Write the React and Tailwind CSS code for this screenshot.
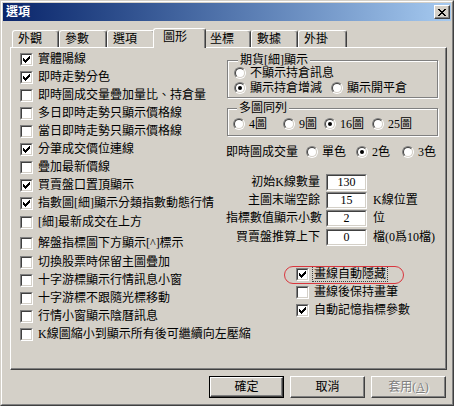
import React from 'react';

// classic win2k 3D helpers
const sunkenOuter = 'border border-t-[#808080] border-l-[#808080] border-b-white border-r-white';
const sunkenInner = 'border border-t-[#404040] border-l-[#404040] border-b-[#d4d0c8] border-r-[#d4d0c8]';
const raised = 'border border-t-white border-l-white border-b-[#404040] border-r-[#404040] shadow-[inset_-1px_-1px_0_#808080]';

const CHECK_TOPS = [2, 3, 4, 3, 2, 1, 0];

const Check = ({ on }) => (
  <span className={`block w-[13px] h-[13px] shrink-0 ${sunkenOuter}`}>
    <span className={`block w-full h-full bg-white ${sunkenInner}`}>
      {on && (
        <svg width="9" height="9" viewBox="0 0 9 9" shapeRendering="crispEdges" className="block">
          {CHECK_TOPS.map((t, i) => (
            <rect key={i} x={i + 1} y={t + 1} width="1" height="3" fill="#000" />
          ))}
        </svg>
      )}
    </span>
  </span>
);

const Radio = ({ on }) => (
  <span className={`block w-[12px] h-[12px] shrink-0 rounded-full ${sunkenOuter}`}>
    <span className={`flex items-center justify-center w-full h-full rounded-full bg-white ${sunkenInner}`}>
      {on && <span className="block w-[4px] h-[4px] rounded-full bg-black" />}
    </span>
  </span>
);

const RadioItem = ({ on, label, className = '' }) => (
  <div className={`flex items-center gap-[4px] shrink-0 ${className}`}>
    <Radio on={on} />
    <span className="whitespace-nowrap">{label}</span>
  </div>
);

const leftItems = [
  ['實體陽線', true, ''],
  ['即時走勢分色', true, ''],
  ['即時圖成交量疊加量比、持倉量', false, ''],
  ['多日即時走勢只顯示價格線', false, ''],
  ['當日即時走勢只顯示價格線', false, ''],
  ['分筆成交價位連線', true, ''],
  ['疊加最新價線', false, ''],
  ['買賣盤口置頂顯示', true, ''],
  ['指數圖[細]顯示分類指數動態行情', true, ''],
  ['[細]最新成交在上方', false, 'mt-[1px]'],
  ['解盤指標圖下方顯示[^]標示', false, 'mt-[3px]'],
  ['切換股票時保留主圖疊加', false, 'mt-[1px]'],
  ['十字游標顯示行情訊息小窗', false, ''],
  ['十字游標不跟隨光標移動', false, ''],
  ['行情小窗顯示陰曆訊息', false, ''],
  ['K線圖縮小到顯示所有後可繼續向左壓縮', false, ''],
];

const numberRows = [
  ['初始K線數量', '130', '', ''],
  ['主圖末端空餘', '15', 'K線位置', ''],
  ['指標數值顯示小數', '2', '位', ''],
  ['買賣盤推算上下', '0', '檔(0爲10檔)', 'mt-[1px]'],
];

const tabs = [
  ['外觀', 'w-[47px]'],
  ['參數', 'w-[48px]'],
  ['選項', 'w-[48px]'],
  ['圖形', 'w-[53px]', true],
  ['坐標', 'w-[47px]'],
  ['數據', 'w-[47px]'],
  ['外掛', 'w-[49px]'],
];

const Group = ({ title, children, className = '' }) => (
  <fieldset className={`w-[211px] border border-[#808080] shadow-[inset_1px_1px_0_#fff,1px_1px_0_#fff] ${className}`}>
    <legend className="ml-[4px] px-[2px] h-[12px] leading-[12px] bg-[#d4d0c8] relative z-10">{title}</legend>
    {children}
  </fieldset>
);

export default function App() {
  return (
    <div className="w-[454px] h-[406px] bg-[#d4d0c8] border border-t-[#d4d0c8] border-l-[#d4d0c8] border-b-[#404040] border-r-[#404040] text-[12px] leading-[14px] text-black font-['Liberation_Serif','Noto_Sans_CJK_TC',serif]">
      <div className="h-full border border-t-white border-l-white border-b-[#808080] border-r-[#808080] p-[1px] flex flex-col">
        {/* Title bar */}
        <div className="h-[18px] flex items-center justify-between pl-[3px] pr-[1px] bg-linear-to-r from-[#0a246a] to-[#a6caf0]">
          <span className="text-white font-bold">選項</span>
          <div className={`w-[16px] h-[14px] flex items-center justify-center bg-[#d4d0c8] ${raised}`}>
            <svg width="8" height="7" viewBox="0 0 8 7" shapeRendering="crispEdges">
              <path d="M0 0h2v1h1v1h2V1h1V0h2v1H7v1H6v1H5v1h1v1h1v1h1v1H6V6H5V5H3v1H2v1H0V6h1V5h1V4h1V3H2V2H1V1H0z" fill="#000" />
            </svg>
          </div>
        </div>

        {/* Tabs */}
        <div className="flex items-end h-[19px] mt-[7px] pl-[9px]">
          {tabs.map(([label, w, active]) =>
            active ? (
              <div
                key={label}
                className={`${w} h-[20px] -mx-[2px] -mb-[1px] relative z-10 bg-[#d4d0c8] border-t border-l border-r border-t-white border-l-white border-r-[#404040] rounded-t-[3px] shadow-[inset_-1px_0_0_#808080] pl-[9px] pt-[1px]`}
              >
                {label}
              </div>
            ) : (
              <div
                key={label}
                className={`${w} h-[17px] border-t border-l border-r border-t-white border-l-white border-r-[#404040] rounded-t-[3px] shadow-[inset_-1px_0_0_#808080] pl-[5px] pt-[1px]`}
              >
                {label}
              </div>
            )
          )}
        </div>

        {/* Panel */}
        <div className={`ml-[7px] w-[437px] h-[323px] flex ${raised}`}>
          {/* Left column */}
          <div className="w-[216px] shrink-0 pl-[9px] pt-[2px] flex flex-col">
            {leftItems.map(([label, on, extra]) => (
              <div key={label} className={`h-[18px] flex items-center gap-[5px] ${extra}`}>
                <Check on={on} />
                <span className="whitespace-nowrap">{label}</span>
              </div>
            ))}
          </div>

          {/* Right column */}
          <div className="pt-[6px] flex flex-col">
            <Group title="期貨[細]顯示" className="pl-[6px] pb-[2px]">
              <div className="h-[14px] flex items-center">
                <RadioItem label="不顯示持倉訊息" />
              </div>
              <div className="h-[14px] mt-[1px] flex items-center">
                <RadioItem on label="顯示持倉增減" className="w-[97px]" />
                <RadioItem label="顯示開平倉" />
              </div>
            </Group>

            <Group title="多圖同列" className="mt-[4px] pl-[5px] pt-[3px] pb-[4px]">
              <div className="h-[14px] flex items-center">
                <RadioItem label="4圖" className="w-[50px]" />
                <RadioItem label="9圖" className="w-[41px]" />
                <RadioItem on label="16圖" className="w-[48px]" />
                <RadioItem label="25圖" />
              </div>
            </Group>

            <div className="h-[16px] mt-[8px] -ml-[1px] flex items-center">
              <span className="w-[80px] whitespace-nowrap">即時圖成交量</span>
              <RadioItem label="單色" className="w-[50px]" />
              <RadioItem on label="2色" className="w-[46px]" />
              <RadioItem label="3色" />
            </div>

            <div className="mt-[13px] flex flex-col">
              {numberRows.map(([label, value, unit, extra]) => (
                <div key={label} className={`h-[18px] -ml-[1px] flex items-center ${extra}`}>
                  <span className="w-[94px] text-right whitespace-nowrap">{label}</span>
                  <div className={`ml-[6px] w-[41px] h-[17px] ${sunkenOuter}`}>
                    <div className={`w-full h-full bg-white flex items-center justify-center ${sunkenInner}`}>
                      {value}
                    </div>
                  </div>
                  <span className="ml-[6px] whitespace-nowrap">{unit}</span>
                </div>
              ))}
            </div>

            <div className="mt-[19px] flex flex-col">
              <div className="relative h-[18px] pl-[69px] flex items-center gap-[4px]">
                <Check on />
                <span className="outline-1 outline-dotted outline-[#404040] outline-offset-0 px-[1px]">畫線自動隱藏</span>
                <div className="absolute left-[57px] top-[1px] w-[120px] h-[18px] rounded-full border border-[#d9363e]" />
              </div>
              <div className="h-[18px] pl-[69px] flex items-center gap-[5px]">
                <Check />
                <span>畫線後保持畫筆</span>
              </div>
              <div className="h-[18px] pl-[69px] flex items-center gap-[5px]">
                <Check on />
                <span>自動記憶指標參數</span>
              </div>
            </div>
          </div>
        </div>

        {/* Buttons */}
        <div className="flex justify-end gap-[6px] mt-[6px] pr-[5px]">
          <div className="w-[75px] h-[22px] border border-black">
            <div className={`w-full h-full flex items-center justify-center ${raised}`}>確定</div>
          </div>
          <div className={`w-[75px] h-[22px] flex items-center justify-center ${raised}`}>取消</div>
          <div className={`w-[75px] h-[22px] flex items-center justify-center text-[#808080] [text-shadow:1px_1px_0_#fff] ${raised}`}>
            套用(<span className="underline">A</span>)
          </div>
        </div>
      </div>
    </div>
  );
}
